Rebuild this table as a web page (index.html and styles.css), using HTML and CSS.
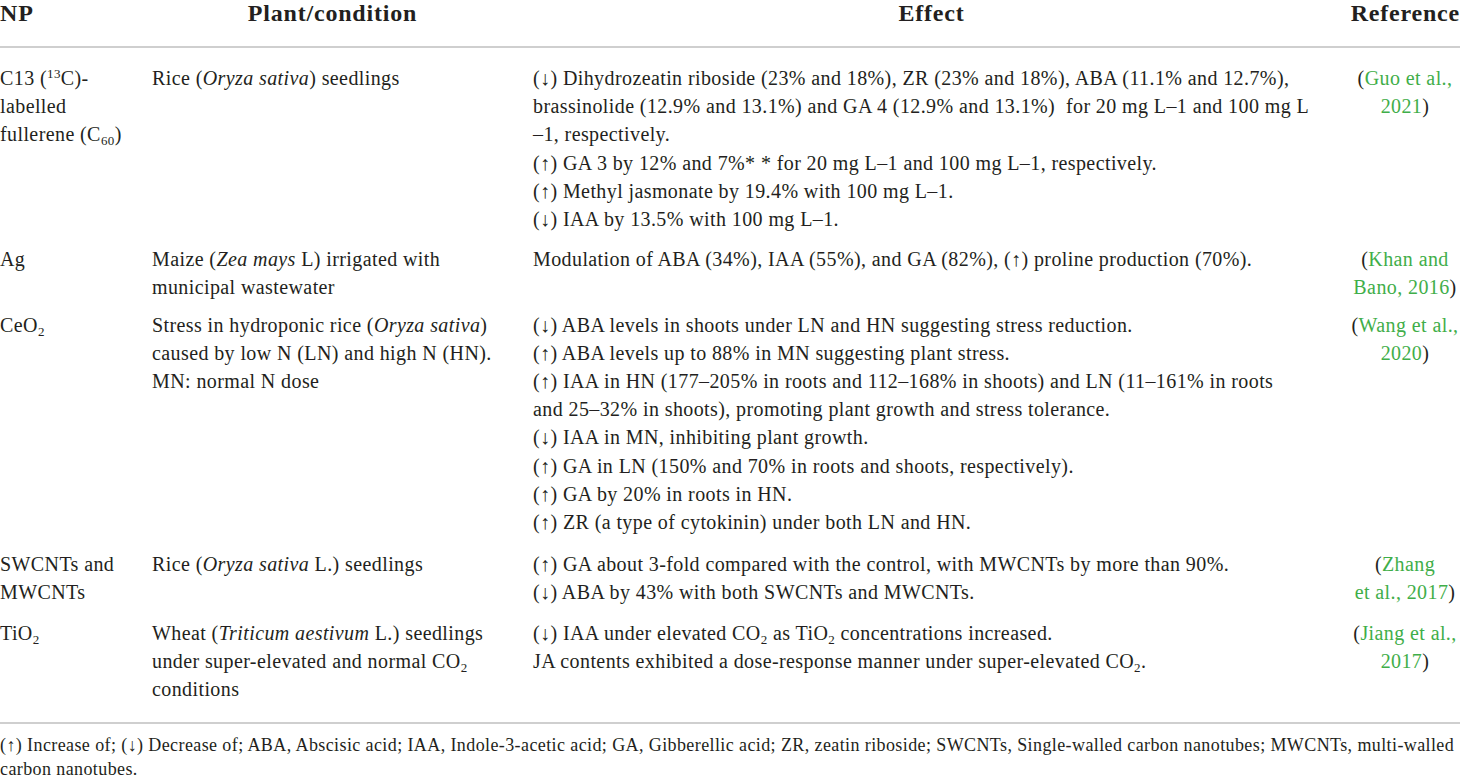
FILE: index.html
```html
<!DOCTYPE html>
<html>
<head>
<meta charset="utf-8">
<link rel="stylesheet" href="styles.css">
</head>
<body>
<table class="tbl">
  <colgroup>
    <col class="c-np">
    <col class="c-plant">
    <col class="c-effect">
    <col class="c-ref">
  </colgroup>
  <thead>
    <tr>
      <th class="h-np">NP</th>
      <th class="h-plant">Plant/condition</th>
      <th class="h-effect">Effect</th>
      <th class="h-ref">Reference</th>
    </tr>
  </thead>
  <tbody>
    <tr class="first">
      <td>C13 (<sup>13</sup>C)-<br>labelled<br>fullerene (C<sub>60</sub>)</td>
      <td>Rice (<i>Oryza sativa</i>) seedlings</td>
      <td>(↓) Dihydrozeatin riboside (23% and 18%), ZR (23% and 18%), ABA (11.1% and 12.7%),<br>brassinolide (12.9% and 13.1%) and GA 4 (12.9% and 13.1%)&nbsp; for 20 mg L–1 and 100 mg L<br>–1, respectively.<br>(↑) GA 3 by 12% and 7%* * for 20 mg L–1 and 100 mg L–1, respectively.<br>(↑) Methyl jasmonate by 19.4% with 100 mg L–1.<br>(↓) IAA by 13.5% with 100 mg L–1.</td>
      <td class="ref">(<span class="lnk">Guo et al.,<br>2021</span>)</td>
    </tr>
    <tr>
      <td>Ag</td>
      <td>Maize (<i>Zea mays</i> L) irrigated with<br>municipal wastewater</td>
      <td>Modulation of ABA (34%), IAA (55%), and GA (82%), (↑) proline production (70%).</td>
      <td class="ref">(<span class="lnk">Khan and<br>Bano, 2016</span>)</td>
    </tr>
    <tr class="ceo">
      <td>CeO<sub>2</sub></td>
      <td>Stress in hydroponic rice (<i>Oryza sativa</i>)<br>caused by low N (LN) and high N (HN).<br>MN: normal N dose</td>
      <td>(↓) ABA levels in shoots under LN and HN suggesting stress reduction.<br>(↑) ABA levels up to 88% in MN suggesting plant stress.<br>(↑) IAA in HN (177–205% in roots and 112–168% in shoots) and LN (11–161% in roots<br>and 25–32% in shoots), promoting plant growth and stress tolerance.<br>(↓) IAA in MN, inhibiting plant growth.<br>(↑) GA in LN (150% and 70% in roots and shoots, respectively).<br>(↑) GA by 20% in roots in HN.<br>(↑) ZR (a type of cytokinin) under both LN and HN.</td>
      <td class="ref">(<span class="lnk">Wang et al.,<br>2020</span>)</td>
    </tr>
    <tr>
      <td>SWCNTs and<br>MWCNTs</td>
      <td>Rice (<i>Oryza sativa</i> L.) seedlings</td>
      <td>(↑) GA about 3-fold compared with the control, with MWCNTs by more than 90%.<br>(↓) ABA by 43% with both SWCNTs and MWCNTs.</td>
      <td class="ref">(<span class="lnk">Zhang<br>et al., 2017</span>)</td>
    </tr>
    <tr class="last">
      <td>TiO<sub>2</sub></td>
      <td>Wheat (<i>Triticum aestivum</i> L.) seedlings<br>under super-elevated and normal CO<sub>2</sub><br>conditions</td>
      <td>(↓) IAA under elevated CO<sub>2</sub> as TiO<sub>2</sub> concentrations increased.<br>JA contents exhibited a dose-response manner under super-elevated CO<sub>2</sub>.</td>
      <td class="ref">(<span class="lnk">Jiang et al.,<br>2017</span>)</td>
    </tr>
  </tbody>
</table>
<p class="foot">(↑) Increase of; (↓) Decrease of; ABA, Abscisic acid; IAA, Indole-3-acetic acid; GA, Gibberellic acid; ZR, zeatin riboside; SWCNTs, Single-walled carbon nanotubes; MWCNTs, multi-walled<br>carbon nanotubes.</p>
</body>
</html>
```

FILE: styles.css
```css
html, body {
  margin: 0;
  padding: 0;
  background: #ffffff;
}
body {
  font-family: "Liberation Serif", "Times New Roman", serif;
  color: #231f20;
  width: 1460px;
  height: 778px;
  overflow: hidden;
}
.tbl {
  width: 1460px;
  border-collapse: collapse;
  table-layout: fixed;
  font-size: 20px;
  letter-spacing: 0.4px;
  line-height: 28.2px;
}
.c-np { width: 152px; }
.c-plant { width: 381px; }
.c-effect { width: 817px; }
.c-ref { width: 110px; }

th {
  font-weight: bold;
  font-size: 24px;
  letter-spacing: 0.8px;
  line-height: 26px;
  padding: 0 0 20px 0;
  border-bottom: 2px solid #cfcfcf;
  vertical-align: top;
  white-space: nowrap;
}
.h-np { text-align: left; }
.h-plant { text-align: center; padding-right: 20px; }
.h-effect { text-align: center; padding-right: 20px; }
.h-ref { text-align: right; }

td {
  vertical-align: top;
  padding: 6px 0 6px 0;
  text-align: left;
}
tr.first td { padding-top: 16px; }
tr.ceo td { padding-top: 3px; padding-bottom: 8px; }
tr.last td { padding-bottom: 19px; border-bottom: 2px solid #cfcfcf; }
td.ref { text-align: center; white-space: nowrap; }
.lnk { color: #3fae49; }

sup, sub {
  font-size: 13px;
  line-height: 0;
}
sup { vertical-align: 7px; }
sub { vertical-align: -4px; }

.foot {
  margin: 9px 0 0 0;
  font-size: 18px;
  line-height: 24px;
  letter-spacing: 0.4px;
  white-space: nowrap;
}
```
